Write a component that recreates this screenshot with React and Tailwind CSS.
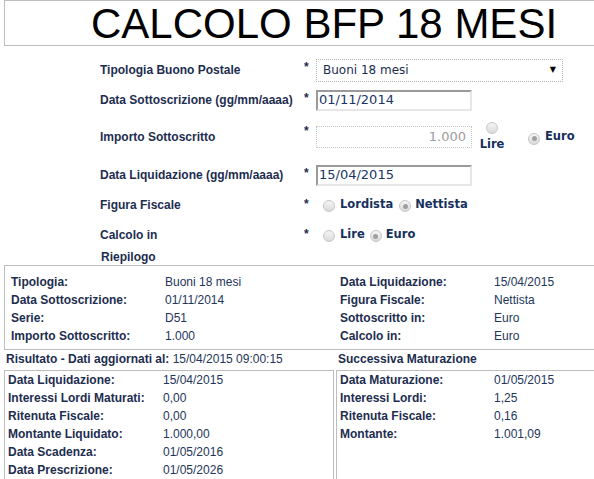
import React from 'react';

const Radio = ({ checked }) => (
    <span className="flex w-[12px] h-[12px] shrink-0 items-center justify-center rounded-full border border-[#c6c6c6] bg-linear-to-b from-[#f6f6f6] to-[#dadada]">
        {checked && <span className="w-[5px] h-[5px] rounded-full bg-[#a0a0a0]" />}
    </span>
);

const Star = () => (
    <span className="w-[12px] self-start pt-[3px] text-[12px] leading-[12px] text-[#1d2d4f] font-bold">*</span>
);

const Label = ({ children }) => (
    <span className="w-[204px] font-bold text-[12px] text-[#1d2d4f]">{children}</span>
);

const riepilogo = [
    ['Tipologia:', 'Buoni 18 mesi', 'Data Liquidazione:', '15/04/2015'],
    ['Data Sottoscrizione:', '01/11/2014', 'Figura Fiscale:', 'Nettista'],
    ['Serie:', 'D51', 'Sottoscritto in:', 'Euro'],
    ['Importo Sottoscritto:', '1.000', 'Calcolo in:', 'Euro'],
];

const risultato = [
    ['Data Liquidazione:', '15/04/2015'],
    ['Interessi Lordi Maturati:', '0,00'],
    ['Ritenuta Fiscale:', '0,00'],
    ['Montante Liquidato:', '1.000,00'],
    ['Data Scadenza:', '01/05/2016'],
    ['Data Prescrizione:', '01/05/2026'],
];

const maturazione = [
    ['Data Maturazione:', '01/05/2015'],
    ['Interessi Lordi:', '1,25'],
    ['Ritenuta Fiscale:', '0,16'],
    ['Montante:', '1.001,09'],
];

export default function App() {
    return (
        <div className="w-[594px] h-[479px] overflow-hidden bg-white font-['Liberation_Sans',Arial,sans-serif]">
            {/* titolo */}
            <div className="ml-[4px] w-[640px] h-[46px] border border-[#bdbdbd] pt-[2px] pl-[86px]">
                <h1 className="text-[42px] leading-[42px] text-black">CALCOLO BFP 18 MESI</h1>
            </div>

            {/* form */}
            <div className="pl-[100px]">
                <div className="mt-[12px] h-[24px] flex items-center">
                    <Label>Tipologia Buono Postale</Label>
                    <Star />
                    <div className="w-[247px] h-[23px] border border-dotted border-[#b5b5b5] flex items-center justify-between pl-[6px] pr-[6px] font-['DejaVu_Sans',Verdana,sans-serif] text-[12px] text-[#1d2d4f]">
                        <span>Buoni 18 mesi</span>
                        <span className="text-[8px] text-black">▼</span>
                    </div>
                </div>

                <div className="mt-[7px] h-[22px] flex items-center">
                    <Label>Data Sottoscrizione (gg/mm/aaaa)</Label>
                    <Star />
                    <div className="w-[156px] h-[21px] border-2 border-t-[#9a9a9a] border-l-[#9a9a9a] border-r-[#e6e6e6] border-b-[#e6e6e6] flex items-center pl-[1px] font-['DejaVu_Sans',Verdana,sans-serif] text-[13px] text-[#1a3566]">
                        01/11/2014
                    </div>
                </div>

                <div className="mt-[11px] h-[30px] flex items-center">
                    <Label>Importo Sottoscritto</Label>
                    <Star />
                    <div className="w-[156px] h-[22px] border border-dotted border-[#c4c4c4] flex items-center justify-end pr-[5px] font-['DejaVu_Sans',Verdana,sans-serif] text-[13px] text-[#9d9d9d]">
                        1.000
                    </div>
                    <div className="ml-[6px] w-[28px] h-[30px] flex flex-col items-center">
                        <Radio />
                        <span className="mt-[3px] font-['DejaVu_Sans',Verdana,sans-serif] font-bold text-[11.5px] leading-[14px] text-[#173060]">Lire</span>
                    </div>
                    <div className="ml-[22px] flex items-center gap-[5px] font-['DejaVu_Sans',Verdana,sans-serif] font-bold text-[11.5px] text-[#173060]">
                        <span className="mt-[3px]"><Radio checked /></span>
                        <span>Euro</span>
                    </div>
                </div>

                <div className="mt-[12px] h-[22px] flex items-center">
                    <Label>Data Liquidazione (gg/mm/aaaa)</Label>
                    <Star />
                    <div className="w-[156px] h-[21px] border-2 border-t-[#9a9a9a] border-l-[#9a9a9a] border-r-[#e6e6e6] border-b-[#e6e6e6] flex items-center pl-[1px] font-['DejaVu_Sans',Verdana,sans-serif] text-[13px] text-[#1a3566]">
                        15/04/2015
                    </div>
                </div>

                <div className="mt-[9px] h-[20px] flex items-center">
                    <Label>Figura Fiscale</Label>
                    <Star />
                    <div className="ml-[7px] flex items-center font-['DejaVu_Sans',Verdana,sans-serif] font-bold text-[11.5px] text-[#173060]">
                        <span className="mt-[2px]"><Radio /></span>
                        <span className="ml-[5px]">Lordista</span>
                        <span className="ml-[6px] mt-[2px]"><Radio checked /></span>
                        <span className="ml-[4px]">Nettista</span>
                    </div>
                </div>

                <div className="mt-[10px] h-[20px] flex items-center">
                    <Label>Calcolo in</Label>
                    <Star />
                    <div className="ml-[7px] flex items-center font-['DejaVu_Sans',Verdana,sans-serif] font-bold text-[11.5px] text-[#173060]">
                        <span className="mt-[2px]"><Radio /></span>
                        <span className="ml-[5px]">Lire</span>
                        <span className="ml-[5px] mt-[2px]"><Radio checked /></span>
                        <span className="ml-[4px]">Euro</span>
                    </div>
                </div>

                <div className="mt-[5px] h-[14px] pl-[1px] flex items-center font-bold text-[12px] text-[#1d2d4f]">Riepilogo</div>
            </div>

            {/* riepilogo */}
            <div className="mt-[1px] ml-[4px] w-[640px] border border-[#bdbdbd] pt-[7px] pb-[4px] pl-[6px] text-[12px]">
                {riepilogo.map(r => (
                    <div key={r[0]} className="h-[18px] flex items-center">
                        <span className="w-[154px] font-bold text-[#1d2d4f]">{r[0]}</span>
                        <span className="w-[175px] text-[#23355a]">{r[1]}</span>
                        <span className="w-[154px] font-bold text-[#1d2d4f]">{r[2]}</span>
                        <span className="text-[#23355a]">{r[3]}</span>
                    </div>
                ))}
            </div>

            {/* risultato */}
            <div className="h-[18px] flex items-center text-[12px]">
                <div className="w-[338px] shrink-0 pl-[6px]">
                    <span className="font-bold text-[#1d2d4f]">Risultato - Dati aggiornati al: </span>
                    <span className="text-[#23355a]">15/04/2015 09:00:15</span>
                </div>
                <span className="font-bold text-[#1d2d4f]">Successiva Maturazione</span>
            </div>

            <div className="mt-[2px] flex text-[12px]">
                <div className="ml-[4px] w-[330px] shrink-0 h-[120px] border border-[#bdbdbd] pl-[3px]">
                    {risultato.map(r => (
                        <div key={r[0]} className="h-[18px] flex items-center">
                            <span className="w-[155px] font-bold text-[#1d2d4f]">{r[0]}</span>
                            <span className="text-[#23355a]">{r[1]}</span>
                        </div>
                    ))}
                </div>
                <div className="ml-[2px] w-[300px] shrink-0 h-[120px] border border-[#bdbdbd] pl-[3px]">
                    {maturazione.map(r => (
                        <div key={r[0]} className="h-[18px] flex items-center">
                            <span className="w-[154px] font-bold text-[#1d2d4f]">{r[0]}</span>
                            <span className="text-[#23355a]">{r[1]}</span>
                        </div>
                    ))}
                </div>
            </div>
        </div>
    );
}
